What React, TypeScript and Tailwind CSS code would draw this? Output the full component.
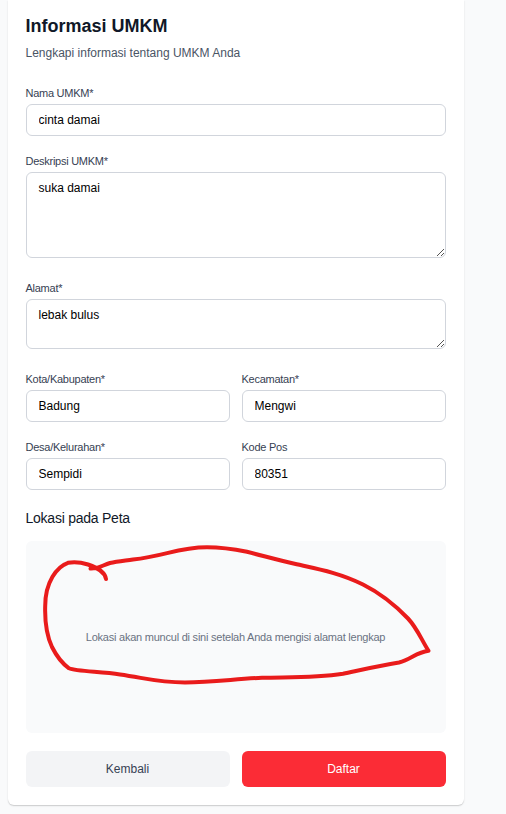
import type { ReactNode } from "react";

function Field({ label, value }: { label: string; value: string }) {
  return (
    <label className="block">
      <span className="-ml-[0.5px] block h-[15px] text-[11px] leading-[15px] tracking-[-0.26px] text-[#364153]">
        {label}
      </span>
      <input
        defaultValue={value}
        className="mt-[3px] block h-8 w-full rounded-[6px] border border-[#d1d5dc] bg-white px-[11.5px] text-xs leading-[18px] text-black outline-none"
      />
    </label>
  );
}

function Area({ label, value, className }: { label: string; value: string; className: string }) {
  return (
    <label className="block">
      <span className="-ml-[0.5px] block h-[15px] text-[11px] leading-[15px] tracking-[-0.26px] text-[#364153]">
        {label}
      </span>
      <span className="relative mt-[3px] block">
        <textarea
          defaultValue={value}
          className={`block w-full resize-none overflow-hidden rounded-[6px] border border-[#d1d5dc] bg-white px-[11.5px] py-[6px] text-xs leading-[18px] text-black outline-none ${className}`}
        />
        <svg
          className="absolute right-[2px] bottom-[2px] h-[7px] w-[7px]"
          viewBox="0 0 7 7"
          fill="#555"
          shapeRendering="crispEdges"
        >
          {[0, 1, 2, 3, 4, 5, 6].map((n) => (
            <rect key={n} x={n} y={6 - n} width="1" height="1" />
          ))}
          {[4, 5, 6].map((n) => (
            <rect key={n} x={n} y={10 - n} width="1" height="1" />
          ))}
        </svg>
      </span>
    </label>
  );
}

function Button({ children, className }: { children: ReactNode; className: string }) {
  return (
    <button type="button" className={`h-9 flex-1 rounded-[6px] pr-px text-xs leading-[18px] ${className}`}>
      {children}
    </button>
  );
}

export default function App() {
  return (
    <div className="relative h-[814px] w-[506px] overflow-hidden bg-[#f9fafb] pl-2 font-['Liberation_Sans',Arial,sans-serif]">
      <form className="flex h-[805px] w-[456px] flex-col rounded-b-[6px] bg-white px-[18px] pt-4 shadow-[0_1px_2px_rgba(0,0,0,0.1),0_1px_1px_rgba(0,0,0,0.1)]">
        <h2 className="-ml-[0.5px] h-[21px] text-lg leading-[21px] font-bold text-[#101828]">Informasi UMKM</h2>
        <p className="mt-[7px] -ml-[0.5px] h-[18px] text-xs leading-[18px] text-[#4a5565]">
          Lengkapi informasi tentang UMKM Anda
        </p>
        <div className="mt-6">
          <Field label="Nama UMKM*" value="cinta damai" />
        </div>
        <div className="mt-[18px]">
          <Area label="Deskripsi UMKM*" value="suka damai" className="h-[86px]" />
        </div>
        <div className="mt-[23px]">
          <Area label="Alamat*" value="lebak bulus" className="h-[50px]" />
        </div>
        <div className="mt-[23px] grid grid-cols-2 gap-x-3 gap-y-[18px]">
          <Field label="Kota/Kabupaten*" value="Badung" />
          <Field label="Kecamatan*" value="Mengwi" />
          <Field label="Desa/Kelurahan*" value="Sempidi" />
          <Field label="Kode Pos" value="80351" />
        </div>
        <h3 className="mt-[18px] -ml-[0.5px] h-[21px] text-sm leading-[21px] tracking-[-0.24px] text-[#101828]">
          Lokasi pada Peta
        </h3>
        <div className="mt-3 flex h-48 items-center justify-center rounded-[6px] bg-[#f9fafb] pr-px">
          <p className="text-[11px] leading-[15px] tracking-[-0.23px] text-[#6a7282]">
            Lokasi akan muncul di sini setelah Anda mengisi alamat lengkap
          </p>
        </div>
        <div className="mt-[18px] flex gap-3">
          <Button className="bg-[#f3f4f6] text-[#364153]">Kembali</Button>
          <Button className="bg-[#fb2c36] text-white">Daftar</Button>
        </div>
      </form>
      <svg
        className="pointer-events-none absolute inset-0"
        width="506"
        height="814"
        fill="none"
        stroke="#e91b1b"
        strokeWidth="4"
        strokeLinecap="round"
        strokeLinejoin="round"
      >
        <path d="M106 579 C105 572 97 567.5 88 564.5 C81 562.3 73 561.8 68 562.8 C57 566.5 45.2 582 45.2 606 C44.7 622 46.5 635 52 647 C57 657 63 664 69 668.3 C76 671.5 100 671.5 120 674.5 C145 678 158 682.5 185 682.5 C212 682.5 235 679 262 677.8 C290 677 315 678 343 673.7 C365 669 380 665.5 399 662.5 C411 659.5 416 652.5 428.5 650.8 C421 639 417 628 408 618.5 C396 606 380 593 363 584.5 C340 573 318 569 296.7 564.3 C278 560 262 555.5 247 551.8 C233 549 220 547.3 207 547.3 C178 547.3 165 556 133 559.5 C124 560.8 117 561.5 110 563 C103 565 98 569 90.5 568.6" />
      </svg>
    </div>
  );
}
